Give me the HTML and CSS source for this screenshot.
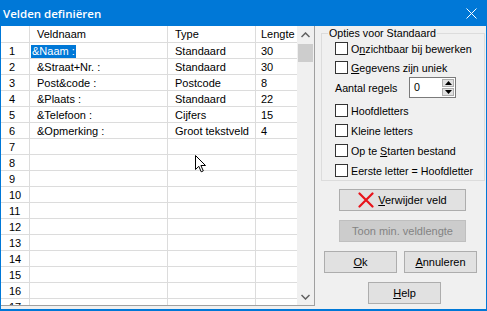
FILE: index.html
```html
<!DOCTYPE html>
<html lang="nl">
  <head>
    <meta charset="UTF-8" />
    <title>Velden definiëren</title>
    <link rel="stylesheet" href="styles.css">
  </head>
  <body class="body">
    <div class="window">
      <div class="titlebar">
        <span class="titlebar__text">Velden definiëren</span>
        <svg class="titlebar__close" width="11" height="11" viewBox="0 0 11 11">
          <path d="M0.5 0.5 L10.5 10.5 M10.5 0.5 L0.5 10.5" stroke="#fff" stroke-width="1" />
        </svg>
      </div>
      <div class="client">
        <div class="grid">
          <div class="sheet">
            <div class="cell"></div><div class="cell cell_text">Veldnaam</div><div class="cell cell_text">Type</div><div class="cell cell_len">Lengte</div>
            <div class="cell cell_num">1</div><div class="cell cell_edit"><span class="selected">&amp;Naam :</span></div><div class="cell cell_text">Standaard</div><div class="cell cell_len">30</div>
            <div class="cell cell_num">2</div><div class="cell cell_text">&amp;Straat+Nr. :</div><div class="cell cell_text">Standaard</div><div class="cell cell_len">30</div>
            <div class="cell cell_num">3</div><div class="cell cell_text">Post&amp;code :</div><div class="cell cell_text">Postcode</div><div class="cell cell_len">8</div>
            <div class="cell cell_num">4</div><div class="cell cell_text">&amp;Plaats :</div><div class="cell cell_text">Standaard</div><div class="cell cell_len">22</div>
            <div class="cell cell_num">5</div><div class="cell cell_text">&amp;Telefoon :</div><div class="cell cell_text">Cijfers</div><div class="cell cell_len">15</div>
            <div class="cell cell_num">6</div><div class="cell cell_text">&amp;Opmerking :</div><div class="cell cell_text">Groot tekstveld</div><div class="cell cell_len">4</div>
            <div class="cell cell_num">7</div><div class="cell"></div><div class="cell"></div><div class="cell cell_len"></div>
            <div class="cell cell_num">8</div><div class="cell"></div><div class="cell"></div><div class="cell cell_len"></div>
            <div class="cell cell_num">9</div><div class="cell"></div><div class="cell"></div><div class="cell cell_len"></div>
            <div class="cell cell_num">10</div><div class="cell"></div><div class="cell"></div><div class="cell cell_len"></div>
            <div class="cell cell_num">11</div><div class="cell"></div><div class="cell"></div><div class="cell cell_len"></div>
            <div class="cell cell_num">12</div><div class="cell"></div><div class="cell"></div><div class="cell cell_len"></div>
            <div class="cell cell_num">13</div><div class="cell"></div><div class="cell"></div><div class="cell cell_len"></div>
            <div class="cell cell_num">14</div><div class="cell"></div><div class="cell"></div><div class="cell cell_len"></div>
            <div class="cell cell_num">15</div><div class="cell"></div><div class="cell"></div><div class="cell cell_len"></div>
            <div class="cell cell_num">16</div><div class="cell"></div><div class="cell"></div><div class="cell cell_len"></div>
            <div class="cell cell_num">17</div><div class="cell"></div><div class="cell"></div><div class="cell cell_len"></div>
          </div>
          <div class="vscroll">
            <div class="vscroll__arrow">
              <svg width="9" height="6" viewBox="0 0 9 6"><path d="M0.5 5 L4.5 1 L8.5 5" fill="none" stroke="#606060" stroke-width="1.5" /></svg>
            </div>
            <div class="vscroll__thumb"></div>
            <div class="vscroll__track"></div>
            <div class="vscroll__arrow">
              <svg width="9" height="6" viewBox="0 0 9 6"><path d="M0.5 1 L4.5 5 L8.5 1" fill="none" stroke="#606060" stroke-width="1.5" /></svg>
            </div>
          </div>
        </div>

        <div class="side">
          <fieldset class="group">
            <legend class="group__title">Opties voor Standaard</legend>
            <label class="check check_first"><span class="check__box"></span><span>O<u>n</u>zichtbaar bij bewerken</span></label>
            <label class="check"><span class="check__box"></span><span><u>G</u>egevens zijn uniek</span></label>
            <div class="spinrow">
              <span class="spinrow__label">Aantal regels</span>
              <div class="spin">
                <span class="spin__value">0</span>
                <div class="spin__btns">
                  <span class="spin__btn"><svg width="7" height="4" viewBox="0 0 7 4"><path d="M0 4 L3.5 0 L7 4 Z" fill="#000" /></svg></span>
                  <span class="spin__btn"><svg width="7" height="4" viewBox="0 0 7 4"><path d="M0 0 L3.5 4 L7 0 Z" fill="#000" /></svg></span>
                </div>
              </div>
            </div>
            <label class="check"><span class="check__box"></span><span>Hoofdletters</span></label>
            <label class="check check_wide"><span class="check__box"></span><span>Kleine letters</span></label>
            <label class="check check_wide"><span class="check__box"></span><span>Op te <u>S</u>tarten bestand</span></label>
            <label class="check check_wide"><span class="check__box"></span><span>Eerste letter = Hoofdletter</span></label>
          </fieldset>

          <button class="button button_wide button_first">
            <svg width="16" height="16" viewBox="0 0 16 16">
              <path d="M1.5 1.5 L14.5 14.5 M14.5 1.5 L1.5 14.5" stroke="#e8141b" stroke-width="2.2" stroke-linecap="round" />
            </svg>
            <span><u>V</u>erwijder veld</span>
          </button>
          <button class="button button_wide button_disabled" disabled><span>Toon min. veldlengte</span></button>
          <div class="button__row">
            <button class="button"><span><u>O</u>k</span></button>
            <button class="button"><span><u>A</u>nnuleren</span></button>
          </div>
          <button class="button button_help"><span><u>H</u>elp</span></button>
        </div>
      </div>

      <svg class="cursor" width="12" height="18" viewBox="0 0 12 18">
        <path d="M0.5 0.5 L0.5 14.5 L3.8 11.3 L6.2 16.8 L8.3 15.9 L5.9 10.5 L10.5 10.5 Z" fill="#fff" stroke="#000" stroke-width="1" stroke-linejoin="round" />
      </svg>
    </div>
  </body>
</html>
```

FILE: styles.css
```css
.body {
  margin: 0;
  background-color: #f0f0f0;
  font-family: "Liberation Sans", Arial, sans-serif;
  font-size: 11px;
  color: #000;
}
.window {
  position: relative;
  width: 487px;
  height: 311px;
  box-sizing: border-box;
  display: flex;
  flex-direction: column;
  background-color: #f0f0f0;
  border: 1px solid #0078d7;
  border-top: none;
  border-bottom-width: 2px;
}
.titlebar {
  height: 26px;
  flex-shrink: 0;
  display: flex;
  align-items: center;
  justify-content: space-between;
  padding: 0 9px 0 2px;
  background-color: #0078d7;
  color: #fff;
  font-family: "Open Sans", sans-serif;
  font-size: 11.5px;
  font-weight: 600;
}
.client {
  flex: 1;
  display: flex;
  min-height: 0;
}
.grid {
  width: 314px;
  height: 280px;
  box-sizing: border-box;
  display: flex;
  background-color: #fff;
  border-right: 1px solid #a0a0a0;
  border-bottom: 1px solid #a0a0a0;
}
.sheet {
  width: 296px;
  display: grid;
  grid-template-columns: 29px 138px 88px 41px;
  grid-template-rows: 17px;
  grid-auto-rows: 16px;
  overflow: hidden;
}
.cell {
  box-sizing: border-box;
  padding-top: 1px;
  border-right: 1px solid #dcdcdc;
  border-bottom: 1px solid #dcdcdc;
  line-height: 15px;
  white-space: nowrap;
  overflow: hidden;
}
.cell_num {
  padding-left: 8px;
}
.cell_text {
  padding-left: 7px;
}
.cell_edit {
  padding-left: 1px;
}
.cell_len {
  padding-left: 5px;
  border-right: none;
}
.selected {
  display: inline-block;
  line-height: 13px;
  padding: 0 1px;
  background-color: #0078d7;
  color: #fff;
}
.vscroll {
  width: 17px;
  display: flex;
  flex-direction: column;
  background-color: #f0f0f0;
}
.vscroll__arrow {
  height: 17px;
  display: flex;
  align-items: center;
  justify-content: center;
}
.vscroll__thumb {
  height: 18px;
  margin: 1px 1px 0;
  background-color: #cdcdcd;
}
.vscroll__track {
  flex: 1;
}
.side {
  flex: 1;
  display: flex;
  flex-direction: column;
  font-size: 10.7px;
}
.group {
  margin: 1px 1px 0 6px;
  padding: 0 0 3px 13px;
  border: 1px solid #dcdcdc;
  min-width: 0;
  display: flex;
  flex-direction: column;
}
.group__title {
  padding: 0 1px;
  margin-left: -7px;
  line-height: 13px;
}
.check {
  display: flex;
  align-items: center;
  gap: 3px;
  height: 13px;
  margin-top: 6px;
  white-space: nowrap;
}
.check_first {
  margin-top: 2px;
}
.check_wide {
  margin-top: 7px;
}
.check__box {
  width: 13px;
  height: 13px;
  flex-shrink: 0;
  box-sizing: border-box;
  border: 1px solid #333;
  background-color: #fff;
}
.spinrow {
  display: flex;
  align-items: center;
  height: 21px;
  margin-top: 3px;
}
.spinrow__label {
  width: 74px;
}
.spin {
  width: 47px;
  height: 21px;
  box-sizing: border-box;
  display: flex;
  border: 1px solid #7a7a7a;
  background-color: #fff;
}
.spin__value {
  flex: 1;
  padding: 3px 0 0 4px;
}
.spin__btns {
  width: 12px;
  display: flex;
  flex-direction: column;
  gap: 1px;
  padding: 1px 1px 1px 0;
}
.spin__btn {
  flex: 1;
  display: flex;
  align-items: center;
  justify-content: center;
  background-color: #e1e1e1;
  border: 1px solid #adadad;
}
.button {
  width: 73px;
  height: 22px;
  box-sizing: border-box;
  display: flex;
  align-items: center;
  justify-content: center;
  gap: 4px;
  padding: 0;
  border: 1px solid #adadad;
  background-color: #e1e1e1;
  font-family: inherit;
  font-size: 11px;
  color: #000;
}
.button_wide {
  width: 127px;
  margin: 9px 0 0 24px;
}
.button_first {
  margin-top: 8px;
}
.button_disabled {
  background-color: #cccccc;
  border-color: #bfbfbf;
  color: #838383;
}
.button__row {
  display: flex;
  gap: 7px;
  margin: 9px 0 0 9px;
}
.button_help {
  margin: 9px 0 0 53px;
}
.cursor {
  position: absolute;
  left: 194px;
  top: 155px;
}
```
